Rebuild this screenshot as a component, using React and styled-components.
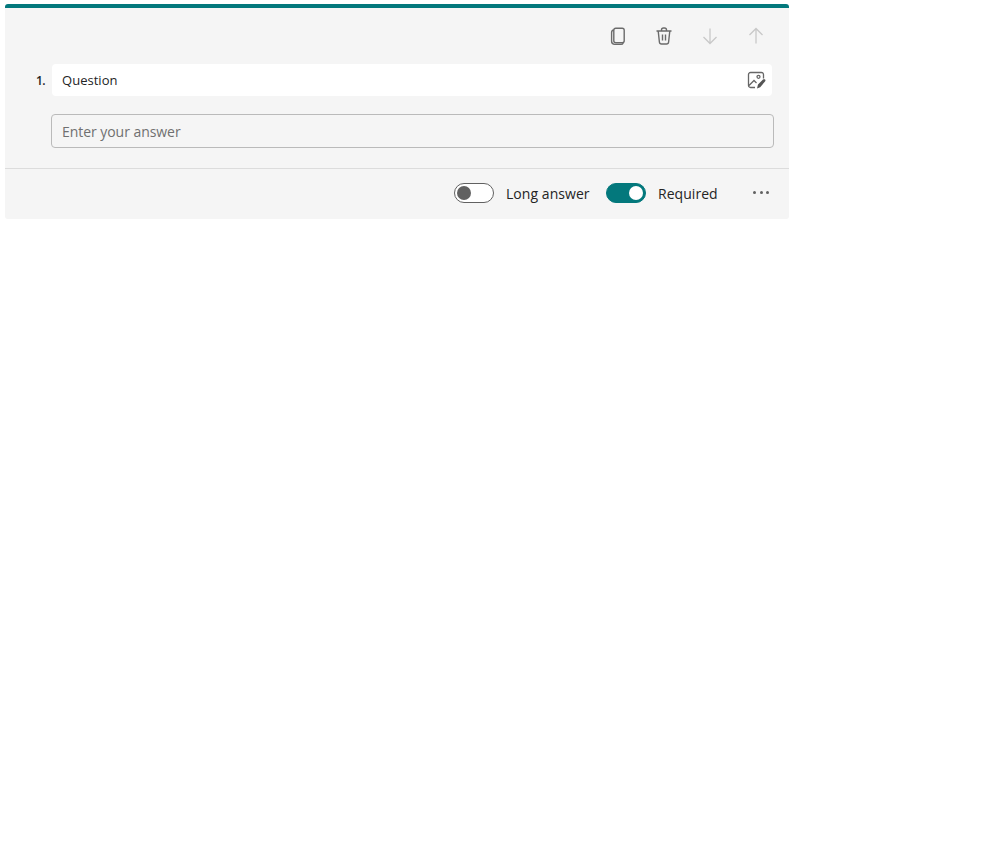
import React from 'react'
import styled, { createGlobalStyle } from 'styled-components'

const GlobalStyle = createGlobalStyle`
  body {
    margin: 0;
    background: #fff;
    font-family: "Open Sans", "Noto Sans", sans-serif;
    color: #242424;
  }
`

const Page = styled.div`
  padding: 4px 5px;
`

const Card = styled.div`
  width: 784px;
  height: 215px;
  box-sizing: border-box;
  display: flex;
  flex-direction: column;
  background: #f5f5f5;
  border-top: 4px solid #03787c;
  border-radius: 3px;
`

const Toolbar = styled.div`
  height: 56px;
  box-sizing: border-box;
  padding: 12px 17px 0 0;
  display: flex;
  justify-content: flex-end;
  gap: 14px;
`

const IconButton = styled.div`
  width: 32px;
  height: 32px;
  display: flex;
  align-items: center;
  justify-content: center;
  color: ${p => (p.$disabled ? '#c8c8c8' : '#6b6b6b')};
`

const QuestionRow = styled.div`
  display: flex;
  align-items: center;
  padding-left: 31px;
`

const Number = styled.span`
  width: 16px;
  font-size: 12px;
  font-weight: 600;
  letter-spacing: -0.6px;
`

const QuestionBox = styled.div`
  width: 720px;
  height: 32px;
  box-sizing: border-box;
  padding: 0 6px 0 10px;
  display: flex;
  align-items: center;
  justify-content: space-between;
  background: #fff;
  border-radius: 4px;
  font-size: 13px;
  letter-spacing: 0.03px;
`

const AnswerBox = styled.div`
  width: 723px;
  height: 34px;
  box-sizing: border-box;
  margin: 18px 0 20px 46px;
  padding: 0 10px;
  display: flex;
  align-items: center;
  border: 1px solid #bababa;
  border-radius: 4px;
  font-size: 14px;
  letter-spacing: -0.05px;
  color: #707070;
`

const Footer = styled.div`
  flex: 1;
  padding: 0 20px 2px 0;
  display: flex;
  align-items: center;
  justify-content: flex-end;
  border-top: 1px solid #dcdcdc;
`

const Toggle = styled.div`
  width: 40px;
  height: 20px;
  box-sizing: border-box;
  padding: 0 2px;
  display: flex;
  align-items: center;
  justify-content: ${p => (p.$on ? 'flex-end' : 'flex-start')};
  background: ${p => (p.$on ? '#03787c' : '#fff')};
  border: 1px solid ${p => (p.$on ? '#03787c' : '#616161')};
  border-radius: 10px;
`

const Knob = styled.div`
  width: 14px;
  height: 14px;
  border-radius: 50%;
  background: ${p => (p.$on ? '#fff' : '#616161')};
`

const ToggleLabel = styled.span`
  width: ${p => p.$width}px;
  margin-left: 12px;
  font-size: 14px;
  letter-spacing: 0.05px;
`

const MoreButton = styled.div`
  width: 16px;
  margin-left: 36px;
  padding-bottom: 2px;
  display: flex;
  justify-content: space-between;
`

const Dot = styled.i`
  width: 3px;
  height: 3px;
  border-radius: 50%;
  background: #616161;
`

const CopyIcon = () => (
  <svg width="20" height="20" viewBox="0 0 20 20" fill="none" stroke="currentColor" strokeWidth="1.4">
    <rect x="5.8" y="2.2" width="10.4" height="14.6" rx="2" />
    <path d="M5.8 4C4.2 4.2 3.6 5.2 3.6 6.6V15.3C3.6 17.2 4.9 18.4 6.8 18.4H13C14 18.4 14.8 18 15.2 17" />
  </svg>
)

const TrashIcon = () => (
  <svg width="20" height="20" viewBox="0 0 20 20" fill="none" stroke="currentColor" strokeWidth="1.4">
    <path d="M2.5 5H17.5M7.5 5V4C7.5 2.9 8.4 2 9.5 2H10.5C11.6 2 12.5 2.9 12.5 4V5" />
    <path d="M4.2 5L5.4 16C5.5 17.2 6.4 18 7.5 18H12.5C13.6 18 14.5 17.2 14.6 16L15.8 5" />
    <path d="M8.5 8.5V14.5M11.5 8.5V14.5" />
  </svg>
)

const ArrowDown = () => (
  <svg width="20" height="20" viewBox="0 0 20 20" fill="none" stroke="currentColor" strokeWidth="1.3">
    <path d="M10 2.5V17.5M3.5 11L10 17.5L16.5 11" />
  </svg>
)

const ArrowUp = () => (
  <svg width="20" height="20" viewBox="0 0 20 20" fill="none" stroke="currentColor" strokeWidth="1.3">
    <path d="M10 17.5V2.5M3.5 9L10 2.5L16.5 9" />
  </svg>
)

const ImageEditIcon = () => (
  <svg width="20" height="20" viewBox="0 0 20 20" fill="none" stroke="#666" strokeWidth="1.3">
    <path d="M9 17.5H4.5C3.4 17.5 2.5 16.6 2.5 15.5V4.5C2.5 3.4 3.4 2.5 4.5 2.5H15.5C16.6 2.5 17.5 3.4 17.5 4.5V8.5" />
    <path d="M3 15.5L8 10.5L10.5 13" />
    <circle cx="12.5" cy="6.8" r="1.5" />
    <path d="M11 18.5L12 14.5L17 9.6C17.7 9 18.6 9 19.1 9.6C19.6 10.2 19.6 11 19 11.6L14.2 17.2Z" fill="#555" stroke="none" />
  </svg>
)

const App = () => (
  <Page>
    <GlobalStyle />
    <Card>
      <Toolbar>
        <IconButton><CopyIcon /></IconButton>
        <IconButton><TrashIcon /></IconButton>
        <IconButton $disabled><ArrowDown /></IconButton>
        <IconButton $disabled><ArrowUp /></IconButton>
      </Toolbar>
      <QuestionRow>
        <Number>1.</Number>
        <QuestionBox>
          Question
          <ImageEditIcon />
        </QuestionBox>
      </QuestionRow>
      <AnswerBox>Enter your answer</AnswerBox>
      <Footer>
        <Toggle><Knob /></Toggle>
        <ToggleLabel $width={100}>Long answer</ToggleLabel>
        <Toggle $on><Knob $on /></Toggle>
        <ToggleLabel $width={59}>Required</ToggleLabel>
        <MoreButton><Dot /><Dot /><Dot /></MoreButton>
      </Footer>
    </Card>
  </Page>
)

export default App
